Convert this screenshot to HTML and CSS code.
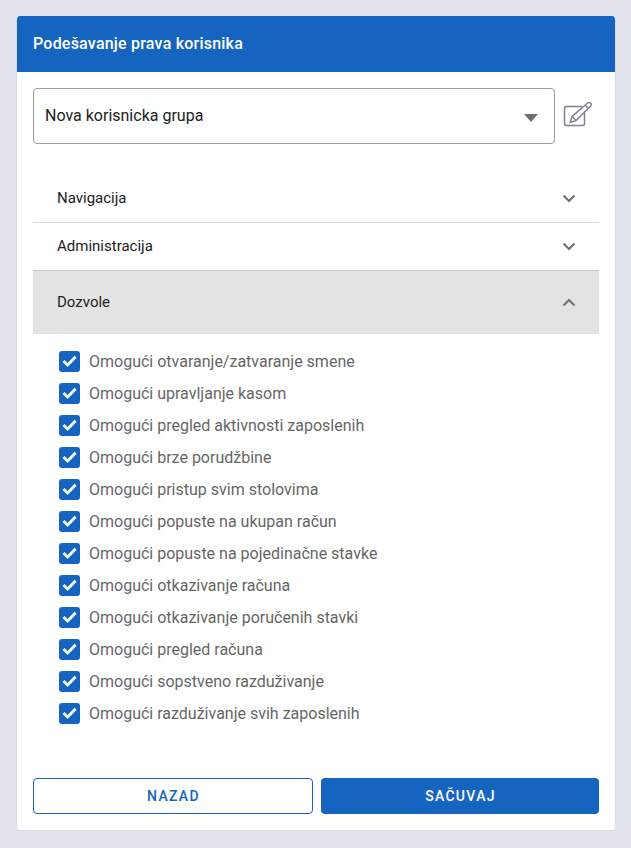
FILE: index.html
```html
<!DOCTYPE html>
<html lang="sr">
<head>
<meta charset="utf-8">
<title>Podešavanje prava korisnika</title>
<link rel="stylesheet" href="styles.css">
</head>
<body>
<main class="card">
  <header class="card-header">Podešavanje prava korisnika</header>
  <div class="card-body">
    <div class="group-row">
      <div class="select">
        <span>Nova korisnicka grupa</span>
        <svg class="select-arrow" width="14" height="8" viewBox="0 0 14 8"><path d="M0 0h14l-7 8z" fill="#6e6e6e"/></svg>
      </div>
      <svg class="edit-icon" width="30" height="26" viewBox="0 0 30 26" fill="none" stroke="#7d828b" stroke-width="1.5">
        <path d="M19 4.500H3.500a2 2 0 0 0-2 2v15a2 2 0 0 0 2 2h16a2 2 0 0 0 2-2V11"/>
        <path d="M9 14.500l-1.800 5.800 5.800-1.700L27.700 4a1.900 1.900 0 0 0 0-2.700l-.3-.3a1.900 1.900 0 0 0-2.700 0z"/>
        <path d="M22.500 3.500l3 3M9 14.500l4 4"/>
      </svg>
    </div>
    <section class="accordion">
      <div class="acc-row acc-nav"><span>Navigacija</span><svg class="chev" width="14" height="9" viewBox="0 0 14 9"><path d="M1.500 1.500L7 7l5.500-5.500" fill="none" stroke="#707070" stroke-width="2"/></svg></div>
      <div class="acc-row acc-admin"><span>Administracija</span><svg class="chev" width="14" height="9" viewBox="0 0 14 9"><path d="M1.500 1.500L7 7l5.500-5.500" fill="none" stroke="#707070" stroke-width="2"/></svg></div>
      <div class="acc-row acc-open"><span>Dozvole</span><svg class="chev" width="14" height="9" viewBox="0 0 14 9"><path d="M1.500 7.500L7 2l5.500 5.500" fill="none" stroke="#707070" stroke-width="2"/></svg></div>
      <ul class="perm-list">
        <li class="perm"><span class="box"><svg width="15" height="12" viewBox="0 0 15 12"><path d="M1.500 6L5.600 10l8-8.200" fill="none" stroke="#fff" stroke-width="2.800"/></svg></span>Omogući otvaranje/zatvaranje smene</li>
        <li class="perm"><span class="box"><svg width="15" height="12" viewBox="0 0 15 12"><path d="M1.500 6L5.600 10l8-8.200" fill="none" stroke="#fff" stroke-width="2.800"/></svg></span>Omogući upravljanje kasom</li>
        <li class="perm"><span class="box"><svg width="15" height="12" viewBox="0 0 15 12"><path d="M1.500 6L5.600 10l8-8.200" fill="none" stroke="#fff" stroke-width="2.800"/></svg></span>Omogući pregled aktivnosti zaposlenih</li>
        <li class="perm"><span class="box"><svg width="15" height="12" viewBox="0 0 15 12"><path d="M1.500 6L5.600 10l8-8.200" fill="none" stroke="#fff" stroke-width="2.800"/></svg></span>Omogući brze porudžbine</li>
        <li class="perm"><span class="box"><svg width="15" height="12" viewBox="0 0 15 12"><path d="M1.500 6L5.600 10l8-8.200" fill="none" stroke="#fff" stroke-width="2.800"/></svg></span>Omogući pristup svim stolovima</li>
        <li class="perm"><span class="box"><svg width="15" height="12" viewBox="0 0 15 12"><path d="M1.500 6L5.600 10l8-8.200" fill="none" stroke="#fff" stroke-width="2.800"/></svg></span>Omogući popuste na ukupan račun</li>
        <li class="perm"><span class="box"><svg width="15" height="12" viewBox="0 0 15 12"><path d="M1.500 6L5.600 10l8-8.200" fill="none" stroke="#fff" stroke-width="2.800"/></svg></span>Omogući popuste na pojedinačne stavke</li>
        <li class="perm"><span class="box"><svg width="15" height="12" viewBox="0 0 15 12"><path d="M1.500 6L5.600 10l8-8.200" fill="none" stroke="#fff" stroke-width="2.800"/></svg></span>Omogući otkazivanje računa</li>
        <li class="perm"><span class="box"><svg width="15" height="12" viewBox="0 0 15 12"><path d="M1.500 6L5.600 10l8-8.200" fill="none" stroke="#fff" stroke-width="2.800"/></svg></span>Omogući otkazivanje poručenih stavki</li>
        <li class="perm"><span class="box"><svg width="15" height="12" viewBox="0 0 15 12"><path d="M1.500 6L5.600 10l8-8.200" fill="none" stroke="#fff" stroke-width="2.800"/></svg></span>Omogući pregled računa</li>
        <li class="perm"><span class="box"><svg width="15" height="12" viewBox="0 0 15 12"><path d="M1.500 6L5.600 10l8-8.200" fill="none" stroke="#fff" stroke-width="2.800"/></svg></span>Omogući sopstveno razduživanje</li>
        <li class="perm"><span class="box"><svg width="15" height="12" viewBox="0 0 15 12"><path d="M1.500 6L5.600 10l8-8.200" fill="none" stroke="#fff" stroke-width="2.800"/></svg></span>Omogući razduživanje svih zaposlenih</li>
      </ul>
    </section>
    <div class="actions">
      <button class="btn btn-outline">NAZAD</button>
      <button class="btn btn-solid">SAČUVAJ</button>
    </div>
  </div>
</main>
</body>
</html>
```
FILE: styles.css
```css
* { box-sizing: border-box; }
html, body { margin: 0; height: 100%; }
body {
  background: #e2e5ee;
  font-family: Roboto, sans-serif;
  padding: 16px 15px 17px 16px;
  overflow: hidden;
}
.card {
  background: #fff;
  border: 1px solid #d8dbe5;
  border-top: 0;
  border-radius: 4px;
  height: 815px;
  display: flex;
  flex-direction: column;
  overflow: hidden;
}
.card-header {
  background: #1565c0;
  color: #fff;
  font-size: 16px;
  font-weight: 500;
  letter-spacing: 0.22px;
  height: 56px;
  line-height: 56px;
  padding-left: 16px;
}
.card-body {
  flex: 1;
  display: flex;
  flex-direction: column;
  padding: 16px 16px 16px;
}
.group-row {
  display: flex;
  align-items: center;
  gap: 8px;
}
.select {
  width: 522px;
  height: 56px;
  border: 1px solid #9e9e9e;
  border-radius: 4px;
  padding: 0 16px 2px 11px;
  display: flex;
  align-items: center;
  justify-content: space-between;
  font-size: 16px;
  color: #212121;
}
.select-arrow { margin-top: 6px; }
.edit-icon { margin-bottom: 2px; }
.accordion { flex: 1; margin-top: 31px; }
.acc-row {
  display: flex;
  align-items: center;
  justify-content: space-between;
  padding: 0 23px 0 24px;
  font-size: 15px;
  color: #212121;
}
.acc-row span { margin-bottom: 2px; }
.acc-nav { height: 48px; border-bottom: 1px solid #dcdcdc; }
.acc-admin { height: 48px; border-bottom: 1px solid #c8c8c8; }
.acc-open { height: 63px; background: #e3e3e3; }
.perm-list {
  list-style: none;
  margin: 0;
  padding: 11px 0 0 26px;
}
.perm {
  height: 32px;
  display: flex;
  align-items: center;
  gap: 9px;
  font-size: 16px;
  color: #666;
}
.box {
  width: 21px;
  height: 21px;
  border-radius: 3px;
  background: #1565c0;
  display: flex;
  align-items: center;
  justify-content: center;
}
.actions {
  display: grid;
  grid-template-columns: 280px 278px;
  gap: 8px;
}
.btn {
  height: 36px;
  padding: 0 0 0 1px;
  border-radius: 4px;
  font-family: Roboto, sans-serif;
  font-size: 14px;
  font-weight: 500;
  letter-spacing: 1.3px;
}
.btn-outline { background: #fff; color: #1565c0; border: 1px solid #1565c0; }
.btn-solid { background: #1565c0; color: #fff; border: 0; }
```
